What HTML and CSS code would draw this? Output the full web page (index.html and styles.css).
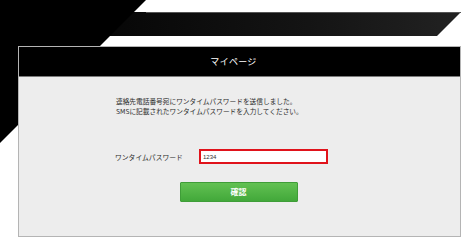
FILE: index.html
```html
<!DOCTYPE html>
<html lang="ja">
<head>
<meta charset="utf-8">
<title>マイページ</title>
<link rel="stylesheet" href="styles.css">
</head>
<body>
<svg class="backdrop" width="474" height="245" viewBox="0 0 474 245" aria-hidden="true">
  <defs>
    <linearGradient id="band" x1="0" y1="0" x2="1" y2="0">
      <stop offset="0" stop-color="#050505"/>
      <stop offset="0.6" stop-color="#141414"/>
      <stop offset="1" stop-color="#222"/>
    </linearGradient>
  </defs>
  <polygon points="80,12 461,12 437,36 80,36" fill="url(#band)"/>
  <line x1="146" y1="12.5" x2="461" y2="12.5" stroke="#555" stroke-width="1"/>
  <polygon points="0,0 146,0 100,46 18,46 18,125 0,143" fill="#000"/>
</svg>
<main class="page">
  <section class="card">
    <header class="card-head">マイページ</header>
    <div class="card-body">
      <p class="message">連絡先電話番号宛にワンタイムパスワードを送信しました。<br>SMSに記載されたワンタイムパスワードを入力してください。</p>
      <div class="form-row">
        <label class="label" for="otp">ワンタイムパスワード</label>
        <input class="otp" id="otp" type="text" value="1234">
      </div>
      <div class="actions">
        <button class="confirm" type="button">確認</button>
      </div>
    </div>
  </section>
</main>
</body>
</html>
```

FILE: styles.css
```css
html, body {
  margin: 0;
  padding: 0;
  background: #fff;
}
body {
  width: 474px;
  height: 245px;
  position: relative;
  overflow: hidden;
  font-family: "Noto Sans CJK JP", "Noto Sans", sans-serif;
  color: #2b2b2b;
}
.backdrop {
  position: absolute;
  left: 0;
  top: 0;
  z-index: 0;
}
.page {
  position: relative;
  z-index: 1;
  padding: 46px 0 0 18px;
}
.card {
  width: 441px;
  height: 189px;
  border: 1px solid #b4b4b4;
  background: #ededed;
  display: flex;
  flex-direction: column;
}
.card-head {
  height: 29px;
  padding-right: 12px;
  background: #000;
  border-bottom: 1px solid #7a7a7a;
  color: #fff;
  font-size: 9px;
  line-height: 29px;
  text-align: center;
  letter-spacing: 0.3px;
}
.card-body {
  padding: 19px 0 0 96px;
  display: flex;
  flex-direction: column;
}
.message {
  margin: 0;
  font-size: 6.7px;
  line-height: 10px;
  padding-left: 1px;
}
.form-row {
  margin-top: 33px;
  display: flex;
  align-items: center;
}
.label {
  width: 84px;
  font-size: 6.8px;
  line-height: 14px;
}
.otp {
  box-sizing: border-box;
  width: 129px;
  height: 15px;
  margin: 0;
  padding: 0 2px;
  border: 2px solid #e0131b;
  background: #fff;
  font-family: "Liberation Sans", sans-serif;
  font-size: 6px;
  color: #333;
  outline: none;
}
.actions {
  margin-top: 18px;
  margin-left: -96px;
  display: flex;
  justify-content: center;
}
.confirm {
  box-sizing: border-box;
  width: 118px;
  height: 20px;
  margin-right: 2px;
  border: 1px solid #3f9d38;
  border-radius: 1px;
  background: linear-gradient(#62c152, #42a83a);
  color: #fff;
  font-family: "Noto Sans CJK JP", sans-serif;
  font-weight: bold;
  font-size: 8px;
  line-height: 18px;
  padding: 0;
}
```
